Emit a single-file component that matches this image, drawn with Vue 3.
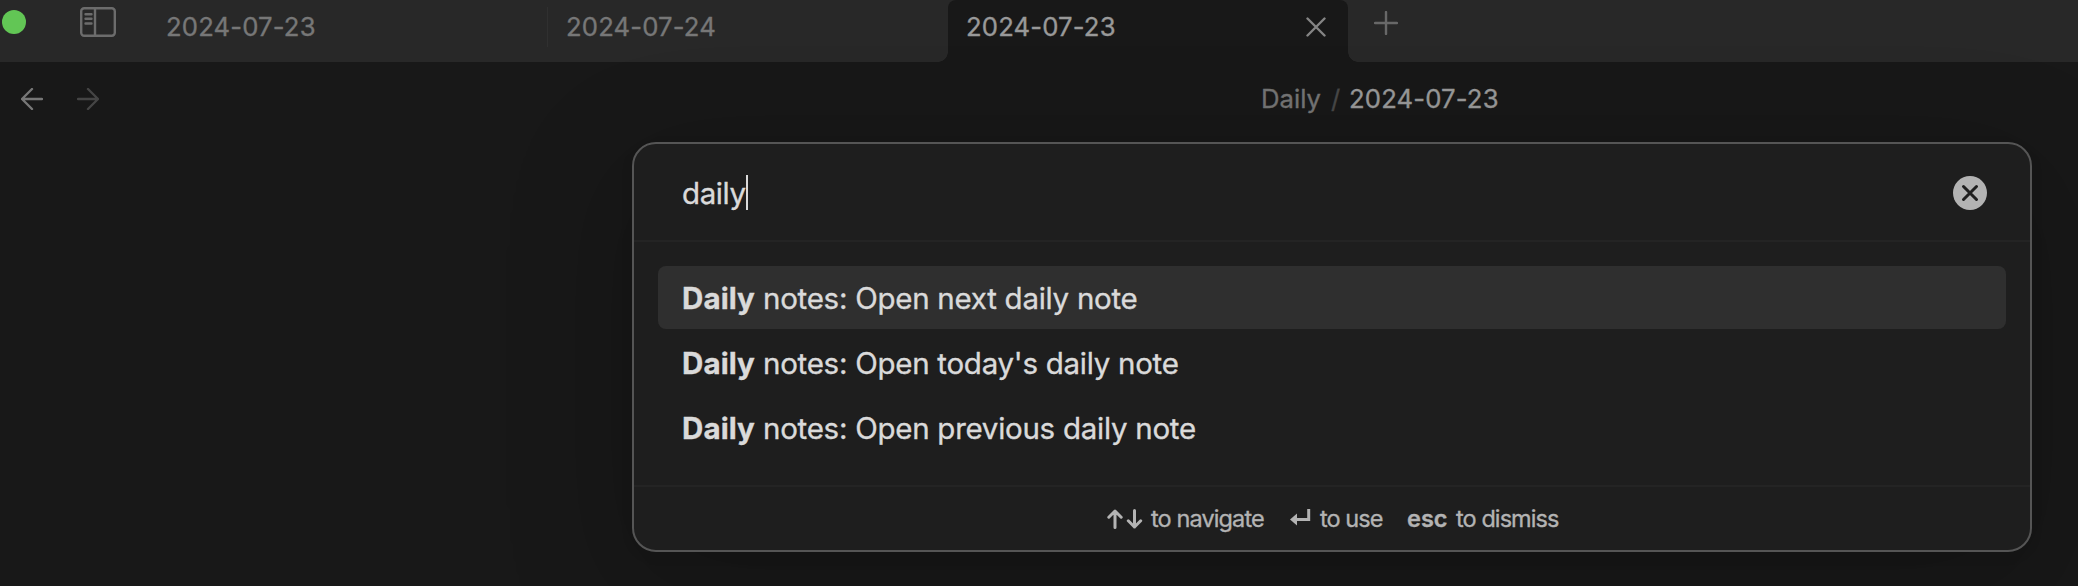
<script setup>
const tabs = [
  { title: '2024-07-23', active: false },
  { title: '2024-07-24', active: false },
  { title: '2024-07-23', active: true },
]
const commands = [
  { id: 'next', label: 'notes: Open next daily note', selected: true },
  { id: 'today', label: "notes: Open today's daily note", selected: false },
  { id: 'previous', label: 'notes: Open previous daily note', selected: false },
]
</script>

<template>
  <div class="window">
    <header class="tab-bar">
      <span class="light"></span>
      <svg class="sidebar-icon" width="36" height="30" viewBox="0 0 36 30">
        <rect x="1.2" y="1.2" width="33.6" height="27.6" rx="3" />
        <path d="M15 1v28M5.5 7.3h6M5.5 11.8h6M5.5 16.5h6" />
      </svg>
      <div class="tabs">
        <div v-for="(tab, i) in tabs" :key="i" class="tab" :class="{ active: tab.active, divided: i === 0 }">
          <span class="tab-title">{{ tab.title }}</span>
          <svg v-if="tab.active" class="tab-close" width="20" height="20" viewBox="0 0 20 20">
            <path d="M1.5 1.5l17 17M18.5 1.5l-17 17" />
          </svg>
        </div>
      </div>
      <svg class="new-tab" width="24" height="24" viewBox="0 0 24 24"><path d="M12 1v22M1 12h22" /></svg>
    </header>

    <div class="view-header">
      <svg class="nav" width="22" height="22" viewBox="0 0 22 22"><path d="M21 11H1M11 1L1 11l10 10" /></svg>
      <svg class="nav forward" width="22" height="22" viewBox="0 0 22 22"><path d="M1 11h20M11 1l10 10-10 10" /></svg>
      <div class="crumbs">
        <span class="folder">Daily</span><span class="slash">/</span><span class="note">2024-07-23</span>
      </div>
    </div>

    <section class="palette">
      <div class="query">
        <span class="query-text">daily</span><span class="caret"></span>
        <svg class="clear" width="34" height="34" viewBox="0 0 34 34">
          <circle cx="17" cy="17" r="17" />
          <path d="M10.5 10.5l13 13M23.5 10.5l-13 13" />
        </svg>
      </div>
      <div class="results">
        <div v-for="c in commands" :key="c.id" class="command" :class="{ selected: c.selected }">
          <b>Daily</b><span class="label">{{ c.label }}</span>
        </div>
      </div>
      <footer class="hints">
        <svg class="arrows" width="36" height="20" viewBox="0 0 36 20">
          <path d="M8 18.5V2M1.8 8.2L8 2l6.200 6.200M27.500 1.500V18M21.300 11.800l6.200 6.200 6.200-6.200" />
        </svg>
        <span class="navigate">to navigate</span>
        <svg class="enter" width="21" height="18" viewBox="0 0 21 18">
          <path class="line" d="M18.700 0v10.500H6" />
          <path class="head" d="M0 10.500L7 4.500v12z" />
        </svg>
        <span class="use">to use</span>
        <b class="esc">esc</b>
        <span class="dismiss">to dismiss</span>
      </footer>
    </section>
  </div>
</template>

<style>
body {
  background: #171717;
}
</style>

<style scoped>
.window {
  position: relative;
  width: 2078px;
  height: 586px;
  overflow: hidden;
  background: #181818;
  font-family: Inter, "Liberation Sans", sans-serif;
  -webkit-text-stroke: 0.35px currentColor;
}
svg {
  display: block;
  flex: none;
  fill: none;
  stroke: #777;
  stroke-width: 2.4;
  stroke-linecap: round;
  stroke-linejoin: round;
}
.tab-bar {
  display: flex;
  height: 62px;
  background: #282828;
}
.light {
  width: 24px;
  height: 24px;
  margin: 10px 0 0 2px;
  border-radius: 50%;
  background: #62c655;
}
.sidebar-icon {
  margin: 7px 0 0 54px;
  stroke: #6c6c6c;
}
.tabs {
  display: flex;
  margin-left: 32px;
}
.tab {
  display: flex;
  box-sizing: border-box;
  width: 400px;
  height: 62px;
  padding-left: 18px;
  color: #777;
  font-size: 25.7px;
  line-height: 32px;
}
.tab-title {
  margin-top: 11px;
  letter-spacing: 0.14px;
}
.divided {
  background: linear-gradient(#303030, #303030) no-repeat 399px 7px / 2px 40px;
}
.active {
  position: relative;
  background: #181818;
  border-radius: 8px 8px 0 0;
  color: #999;
}
.active::before,
.active::after {
  content: "";
  position: absolute;
  bottom: 0;
  width: 10px;
  height: 10px;
}
.active::before {
  left: -10px;
  background: radial-gradient(circle at 0 0, transparent 9.5px, #181818 10px);
}
.active::after {
  right: -10px;
  background: radial-gradient(circle at 100% 0, transparent 9.5px, #181818 10px);
}
.tab-close {
  margin: 17px 22px 0 auto;
  stroke: #858585;
}
.new-tab {
  margin: 11px 0 0 26px;
  stroke: #686868;
}
.view-header {
  display: flex;
  height: 74px;
  font-size: 25.7px;
  line-height: 32px;
}
.nav {
  margin: 26px 0 0 21px;
  stroke: #777;
}
.forward {
  margin-left: 34px;
  stroke: #454545;
}
.crumbs {
  display: flex;
  margin: 21px 0 0 1162px;
}
.folder {
  width: 70px;
  color: #757575;
}
.slash {
  width: 18px;
  color: #484848;
}
.note {
  color: #999;
  letter-spacing: 0.14px;
}
.palette {
  position: absolute;
  top: 142px;
  left: 632px;
  box-sizing: border-box;
  width: 1400px;
  height: 410px;
  border: 2px solid #555;
  border-radius: 24px;
  background: #1e1e1e;
  box-shadow: 0 30px 120px 10px rgba(0, 0, 0, 0.2), 0 4px 14px rgba(0, 0, 0, 0.06);
  color: #dadada;
}
.query {
  display: flex;
  align-items: center;
  box-sizing: border-box;
  height: 98px;
  padding: 2px 43px 0 48px;
  border-bottom: 2px solid #242424;
  font-size: 29.5px;
}
.query-text {
  letter-spacing: -0.4px;
}
.caret {
  width: 2px;
  height: 35px;
  margin-top: -1px;
  background: #dadada;
}
.clear {
  margin-left: auto;
}
.clear circle {
  fill: #b3b3b3;
  stroke: none;
}
.clear path {
  stroke: #1e1e1e;
  stroke-width: 3;
}
.results {
  display: flex;
  flex-direction: column;
  gap: 2px;
  box-sizing: border-box;
  height: 243px;
  padding: 24px;
}
.command {
  display: flex;
  height: 63px;
  padding-left: 24px;
  border-radius: 8px;
  font-size: 29.5px;
  line-height: 64px;
}
.command b {
  width: 81px;
  letter-spacing: 0.1px;
}
.label {
  letter-spacing: -0.27px;
}
.selected {
  background: #2f2f2f;
}
.hints {
  display: flex;
  box-sizing: border-box;
  height: 67px;
  padding-left: 473px;
  border-top: 2px solid #242424;
  color: #b3b3b3;
  font-size: 23.5px;
  line-height: 63px;
  white-space: nowrap;
}
.hints svg {
  stroke: #b3b3b3;
}
.arrows {
  margin: 22px 8px 0 0;
  stroke-width: 3;
}
.navigate {
  width: 139px;
  letter-spacing: -0.89px;
}
.enter {
  margin: 22px 9px 0 0;
}
.enter .line {
  stroke-width: 3;
  stroke-linecap: butt;
  stroke-linejoin: miter;
}
.enter .head {
  fill: #b3b3b3;
  stroke: none;
}
.use {
  width: 87px;
  letter-spacing: -0.95px;
}
.esc {
  width: 49px;
  font-weight: 600;
  letter-spacing: 0;
}
.dismiss {
  letter-spacing: -0.92px;
}
</style>
